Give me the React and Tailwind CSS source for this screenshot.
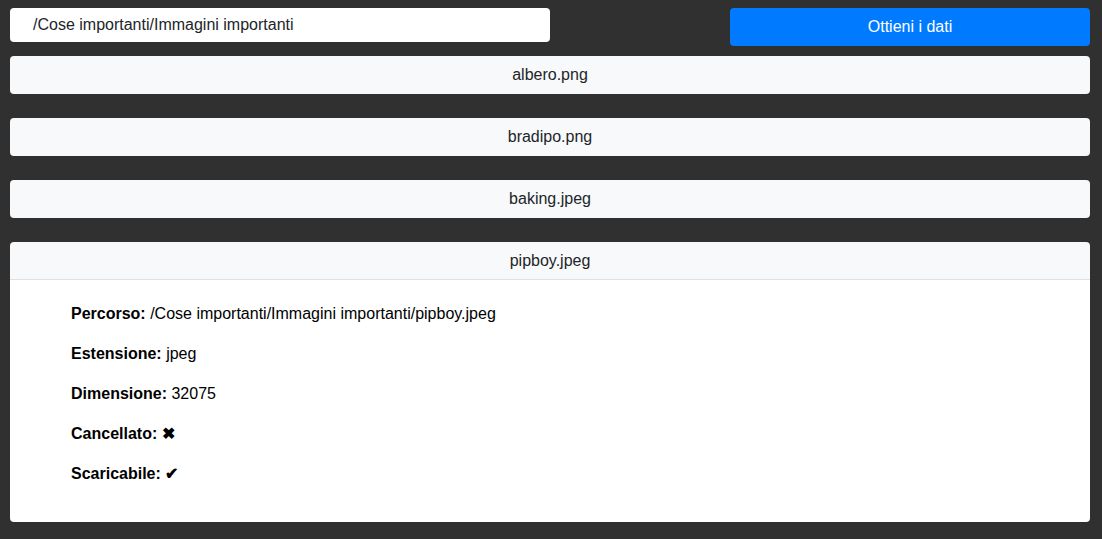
import React, { useState } from 'react';

const files = [
  { name: 'albero.png', ext: 'png', size: 18422, deleted: false, downloadable: true },
  { name: 'bradipo.png', ext: 'png', size: 25110, deleted: false, downloadable: true },
  { name: 'baking.jpeg', ext: 'jpeg', size: 41207, deleted: false, downloadable: true },
  { name: 'pipboy.jpeg', ext: 'jpeg', size: 32075, deleted: true, downloadable: true },
];

const folder = '/Cose importanti/Immagini importanti';

export default function App() {
  const [path, setPath] = useState(folder);
  const [open, setOpen] = useState('pipboy.jpeg');

  return (
    <div className="min-h-[539px] bg-[#303030] pl-[10px] pr-[12px] pt-2 pb-4 text-base text-[#212529]" style={{ fontFamily: '"Liberation Sans", Arial, sans-serif' }}>
      {/* barra superiore */}
      <div className="flex items-start justify-between">
        <input
          value={path}
          onChange={(e) => setPath(e.target.value)}
          className="h-[34px] w-[540px] rounded-[4px] bg-white pl-[23px] text-base text-[#212529] outline-none"
        />
        <button className="h-[38px] w-[360px] rounded-[4px] bg-[#007bff] text-base text-white">
          Ottieni i dati
        </button>
      </div>

      {/* lista file */}
      <div className="mt-[10px] flex flex-col gap-6">
        {files.map((f) => (
          <div key={f.name}>
            <button
              onClick={() => setOpen(open === f.name ? null : f.name)}
              className={
                'flex h-[38px] w-full items-center justify-center bg-[#f8f9fa] text-base text-[#212529] ' +
                (open === f.name ? 'rounded-t-[4px] border-b border-[#dee2e6]' : 'rounded-[4px]')
              }
            >
              {f.name}
            </button>
            {open === f.name && (
              <div className="rounded-b-[4px] bg-white px-[20px] pt-[22px] pb-[20px] text-black">
                <div className="pl-[41px]">
                  <p className="mb-4 leading-6"><b>Percorso:</b> {folder}/{f.name}</p>
                  <p className="mb-4 leading-6"><b>Estensione:</b> {f.ext}</p>
                  <p className="mb-4 leading-6"><b>Dimensione:</b> {f.size}</p>
                  <p className="mb-4 leading-6"><b>Cancellato: {f.deleted ? '✖' : '✔'}</b></p>
                  <p className="mb-4 leading-6"><b>Scaricabile: {f.downloadable ? '✔' : '✖'}</b></p>
                </div>
              </div>
            )}
          </div>
        ))}
      </div>
    </div>
  );
}
